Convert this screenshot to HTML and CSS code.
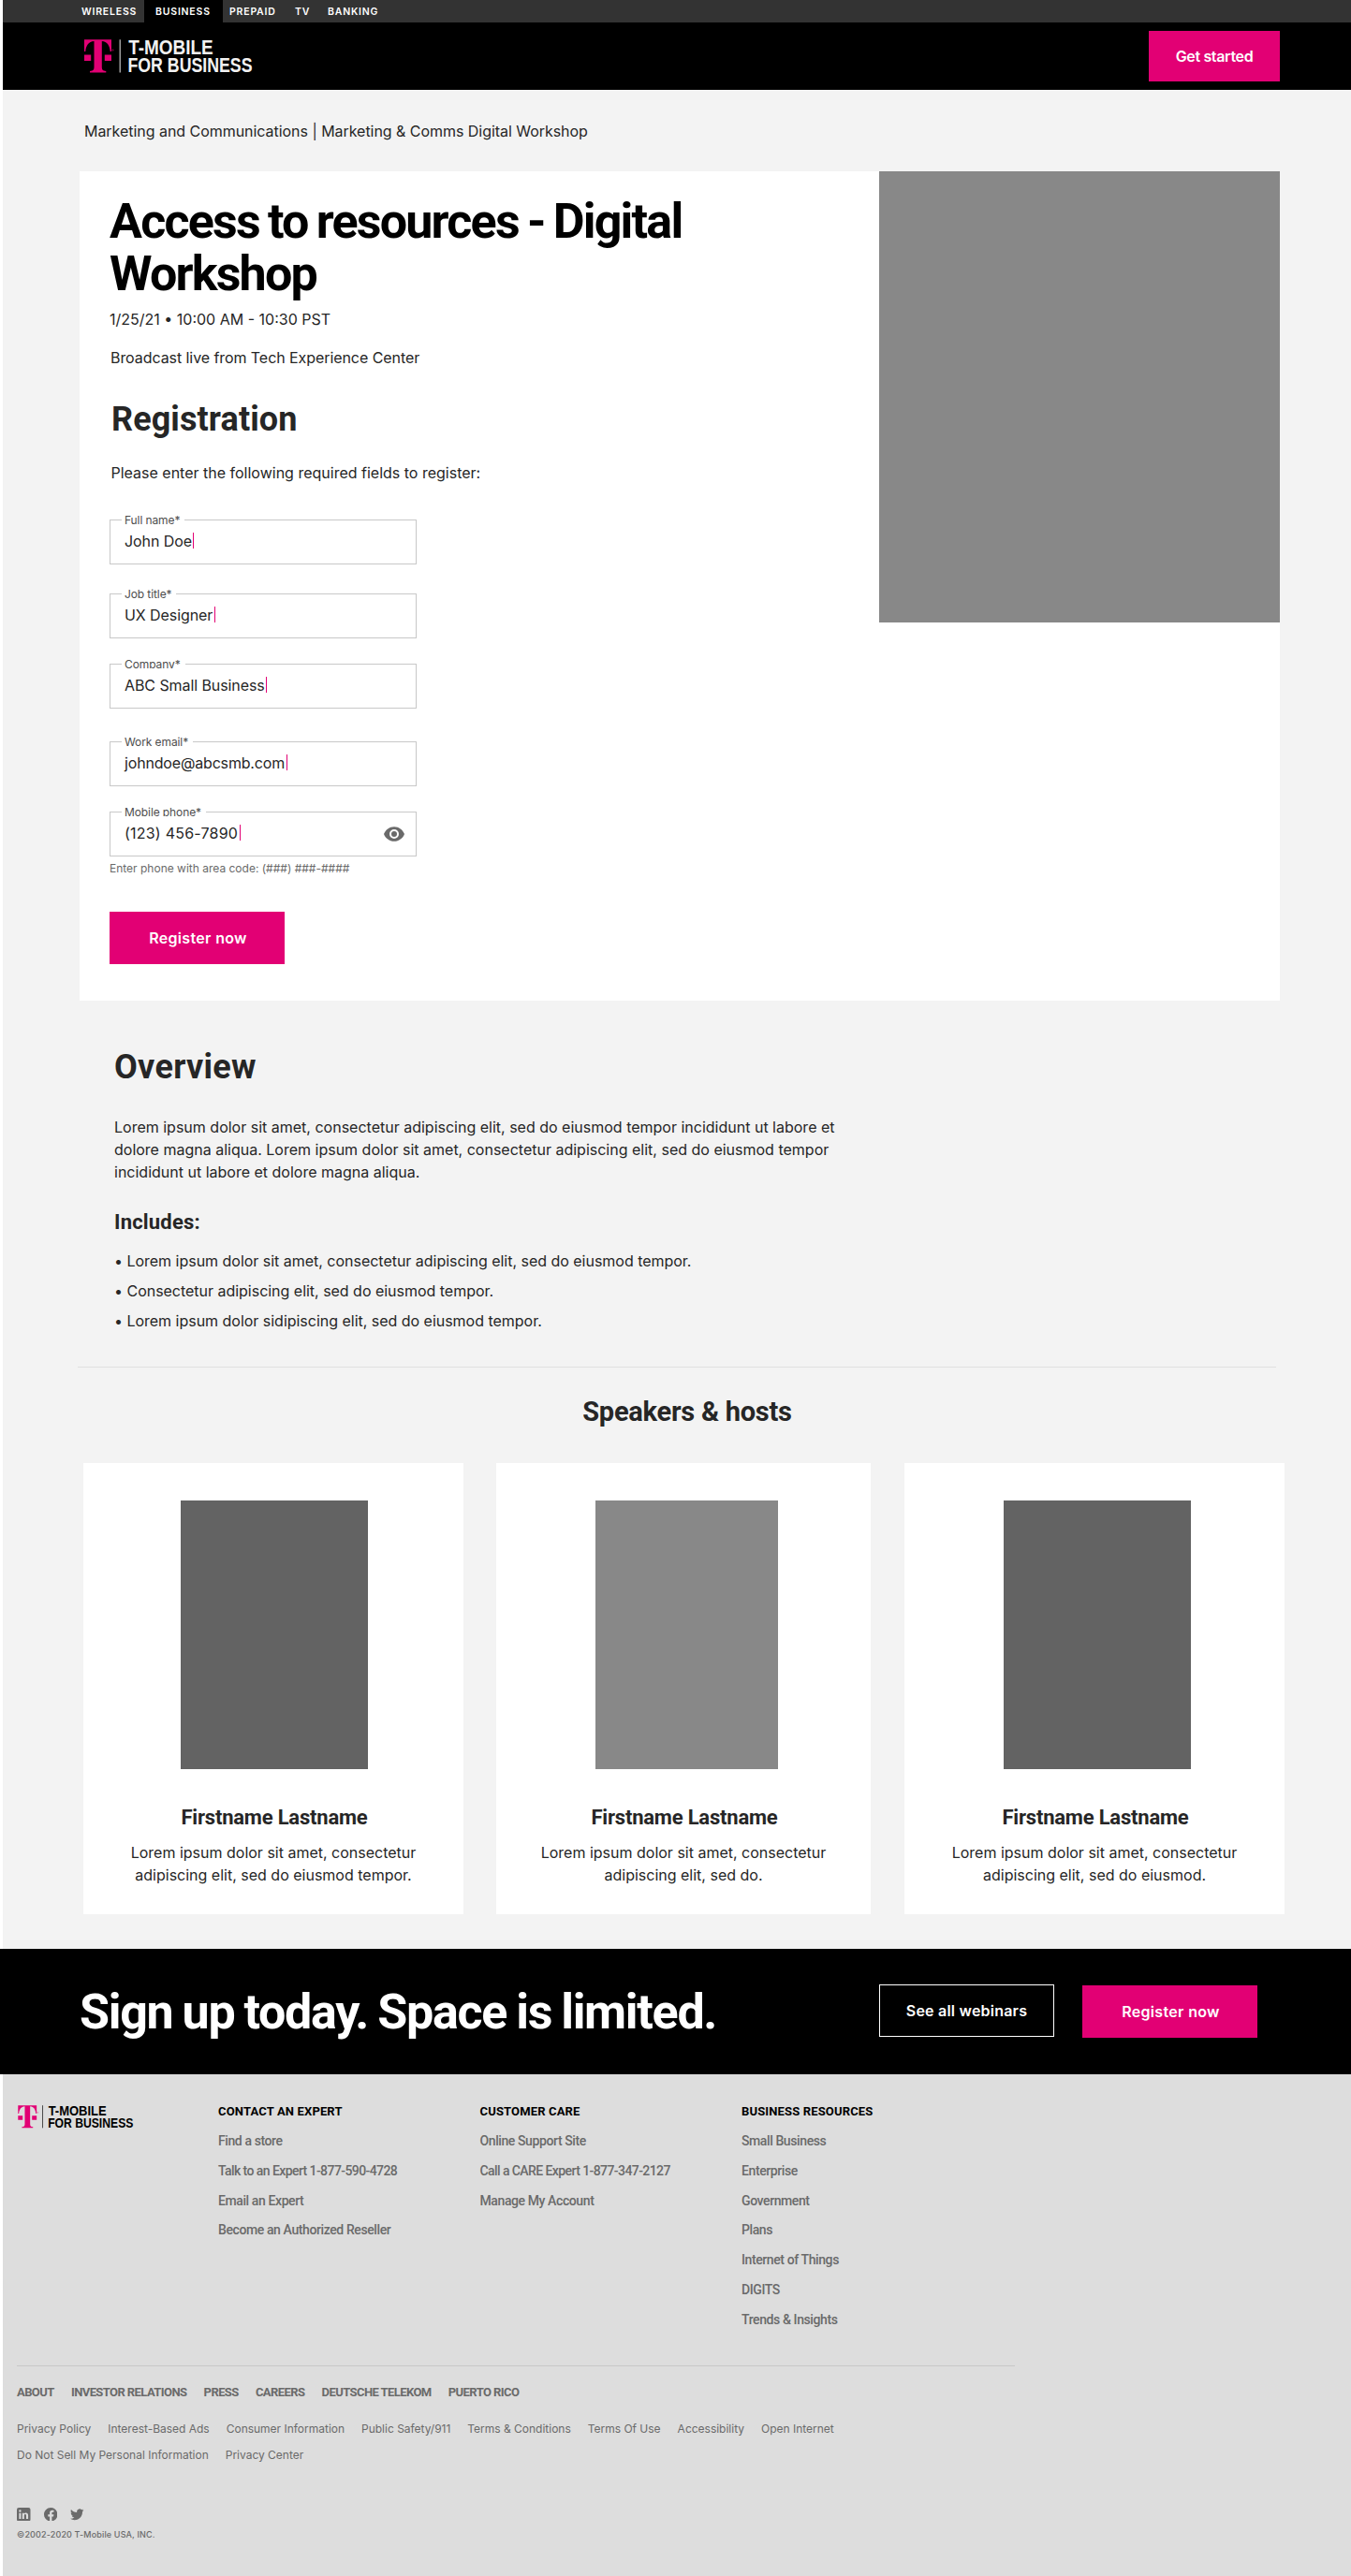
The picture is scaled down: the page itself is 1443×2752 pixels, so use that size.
FILE: index.html
```
<!DOCTYPE html>
<html lang="en">
<head>
<meta charset="utf-8">
<title>Digital Workshop | T-Mobile for Business</title>
<link rel="stylesheet" href="styles.css">
</head>
<body>
<nav class="topnav">
  <a class="tab tab-wireless">WIRELESS</a>
  <a class="tab tab-business">BUSINESS</a>
  <a class="tab tab-prepaid">PREPAID</a>
  <a class="tab tab-tv">TV</a>
  <a class="tab">BANKING</a>
</nav>
<header class="header">
  <svg class="header-logo logo" viewBox="0 0 180 36">
    <path fill="#e20074" d="M0 .3H29V13H27.7C27.2 7 24.600 2.300 18.800 2V29.500C18.800 32.500 19.800 33.700 23.300 33.900V35.400H6V33.900C9.500 33.700 10.500 32.500 10.500 29.500V2C4.600 2.300 1.800 7 1.300 13H0ZM0 16.500H7.200V23H0ZM21.800 16.500H29V23H21.800Z"/>
    <circle cx="30.500" cy="11.500" r=".7" fill="none" stroke="#e20074" stroke-width=".5"/>
    <rect x="37.500" y=".3" width="1.500" height="35.200" fill="currentColor" opacity=".65"/>
    <text x="47.200" y="16" textLength="90.500" lengthAdjust="spacingAndGlyphs">T-MOBILE</text>
    <text x="46.500" y="35.300" textLength="133" lengthAdjust="spacingAndGlyphs">FOR BUSINESS</text>
  </svg>
  <a class="btn btn-start">Get started</a>
</header>

<main class="main">
  <p class="breadcrumb">Marketing and Communications | Marketing &amp; Comms Digital Workshop</p>

  <section class="card">
    <div class="card-body">
      <h1>Access to resources - Digital<br>Workshop</h1>
      <p class="date">1/25/21 • 10:00 AM - 10:30 PST</p>
      <p class="broadcast">Broadcast live from Tech Experience Center</p>
      <h2 class="reg-title">Registration</h2>
      <p class="reg-intro">Please enter the following required fields to register:</p>
      <form class="form">
        <div class="field"><span class="label">Full name*</span><span class="value">John Doe</span><i class="caret"></i></div>
        <div class="field gap-m"><span class="label">Job title*</span><span class="value">UX Designer</span><i class="caret"></i></div>
        <div class="field gap-s"><span class="label">Company*</span><span class="value">ABC Small Business</span><i class="caret"></i></div>
        <div class="field gap-l"><span class="label">Work email*</span><span class="value value-email">johndoe@abcsmb.com</span><i class="caret"></i></div>
        <div class="field gap-s"><span class="label">Mobile phone*</span><span class="value value-phone">(123) 456-7890</span><i class="caret"></i>
          <svg class="eye" viewBox="0 0 24 24"><path fill="#6a6a6a" d="M12 4.200C7 4.200 2.730 7.400 1 12c1.730 4.600 6 7.800 11 7.800s9.270-3.200 11-7.800c-1.730-4.600-6-7.800-11-7.800zM12 17a5 5 0 1 1 0-10 5 5 0 0 1 0 10zm0-8a3 3 0 1 0 0 6 3 3 0 0 0 0-6z"/></svg>
        </div>
        <p class="helper">Enter phone with area code: (###) ###-####</p>
        <a class="btn btn-wide">Register now</a>
      </form>
    </div>
    <div class="hero-photo"></div>
  </section>

  <section class="overview">
    <h2>Overview</h2>
    <p class="overview-text">Lorem ipsum dolor sit amet, consectetur adipiscing elit, sed do eiusmod tempor incididunt ut labore et<br>dolore magna aliqua. Lorem ipsum dolor sit amet, consectetur adipiscing elit, sed do eiusmod tempor<br>incididunt ut labore et dolore magna aliqua.</p>
    <h3>Includes:</h3>
    <ul class="includes">
      <li>• Lorem ipsum dolor sit amet, consectetur adipiscing elit, sed do eiusmod tempor.</li>
      <li>• Consectetur adipiscing elit, sed do eiusmod tempor.</li>
      <li>• Lorem ipsum dolor sidipiscing elit, sed do eiusmod tempor.</li>
    </ul>
  </section>

  <hr class="rule">

  <h2 class="speakers-title">Speakers &amp; hosts</h2>
  <section class="speakers">
    <article class="speaker speaker-1">
      <div class="photo"></div>
      <h3>Firstname Lastname</h3>
      <p>Lorem ipsum dolor sit amet, consectetur<br>adipiscing elit, sed do eiusmod tempor.</p>
    </article>
    <article class="speaker speaker-2">
      <div class="photo"></div>
      <h3>Firstname Lastname</h3>
      <p>Lorem ipsum dolor sit amet, consectetur<br>adipiscing elit, sed do.</p>
    </article>
    <article class="speaker speaker-3">
      <div class="photo"></div>
      <h3>Firstname Lastname</h3>
      <p>Lorem ipsum dolor sit amet, consectetur<br>adipiscing elit, sed do eiusmod.</p>
    </article>
  </section>
</main>

<section class="banner">
  <h2>Sign up today. Space is limited.</h2>
  <a class="btn btn-wide btn-outline">See all webinars</a>
  <a class="btn btn-wide btn-banner">Register now</a>
</section>

<footer class="footer">
  <div class="footer-top">
    <svg class="footer-logo logo" viewBox="0 0 180 36">
      <path fill="#e20074" d="M0 .3H29V13H27.7C27.2 7 24.600 2.300 18.800 2V29.500C18.800 32.500 19.800 33.700 23.300 33.900V35.400H6V33.900C9.500 33.700 10.500 32.500 10.500 29.500V2C4.600 2.300 1.800 7 1.300 13H0ZM0 16.500H7.200V23H0ZM21.800 16.500H29V23H21.800Z"/>
      <circle cx="30.500" cy="11.500" r=".7" fill="none" stroke="#e20074" stroke-width=".5"/>
      <rect x="37.500" y=".3" width="1.500" height="35.200" fill="currentColor" opacity=".65"/>
      <text x="47.200" y="16" textLength="90.500" lengthAdjust="spacingAndGlyphs">T-MOBILE</text>
      <text x="46.500" y="35.300" textLength="133" lengthAdjust="spacingAndGlyphs">FOR BUSINESS</text>
    </svg>
    <div class="col">
      <h4>CONTACT AN EXPERT</h4>
      <a>Find a store</a>
      <a class="tight">Talk to an Expert 1-877-590-4728</a>
      <a>Email an Expert</a>
      <a>Become an Authorized Reseller</a>
    </div>
    <div class="col">
      <h4>CUSTOMER CARE</h4>
      <a>Online Support Site</a>
      <a class="tight">Call a CARE Expert 1-877-347-2127</a>
      <a>Manage My Account</a>
    </div>
    <div class="col">
      <h4>BUSINESS RESOURCES</h4>
      <a>Small Business</a>
      <a>Enterprise</a>
      <a>Government</a>
      <a>Plans</a>
      <a>Internet of Things</a>
      <a>DIGITS</a>
      <a>Trends &amp; Insights</a>
    </div>
  </div>
  <hr class="footer-rule">
  <div class="corporate">
    <a>ABOUT</a><a>INVESTOR RELATIONS</a><a>PRESS</a><a>CAREERS</a><a>DEUTSCHE TELEKOM</a><a>PUERTO RICO</a>
  </div>
  <div class="legal">
    <div class="legal-row"><a>Privacy Policy</a><a>Interest-Based Ads</a><a>Consumer Information</a><a>Public Safety/911</a><a>Terms &amp; Conditions</a><a>Terms Of Use</a><a>Accessibility</a><a>Open Internet</a></div>
    <div class="legal-row"><a>Do Not Sell My Personal Information</a><a>Privacy Center</a></div>
  </div>
  <div class="social">
    <svg viewBox="3 3 18 18"><path fill="#6a6a6a" fill-rule="evenodd" d="M5.500 3h13A2.500 2.500 0 0 1 21 5.500v13a2.500 2.500 0 0 1-2.500 2.500h-13A2.500 2.500 0 0 1 3 18.500v-13A2.500 2.500 0 0 1 5.500 3zM6 10v8h2.500v-8zM7.250 5.900a1.450 1.450 0 1 0 0 2.900 1.450 1.450 0 0 0 0-2.900zM10.200 10v8h2.500v-4.300c0-1.200.5-1.900 1.400-1.900s1.300.7 1.300 1.900V18h2.600v-4.900c0-2.200-1.200-3.300-2.900-3.300-1.200 0-1.900.6-2.400 1.400V10z"/></svg>
    <svg viewBox="0 0 24 24"><path fill="#6a6a6a" d="M24 12.073C24 5.405 18.627 0 12 0S0 5.405 0 12.073c0 6.026 4.388 11.021 10.125 11.927v-8.437H7.078v-3.490h3.047V9.413c0-3.026 1.792-4.697 4.533-4.697 1.312 0 2.686.236 2.686.236v2.971h-1.513c-1.491 0-1.956.93-1.956 1.886v2.264h3.328l-.532 3.490h-2.796V24C19.612 23.094 24 18.100 24 12.073z"/></svg>
    <svg viewBox="0 0 24 24"><path fill="#6a6a6a" d="M23.953 4.570a10 10 0 0 1-2.825.775 4.958 4.958 0 0 0 2.163-2.723c-.951.555-2.005.959-3.127 1.184a4.920 4.920 0 0 0-8.384 4.482C7.690 8.095 4.067 6.130 1.640 3.162a4.822 4.822 0 0 0-.666 2.475c0 1.710.87 3.213 2.188 4.096a4.904 4.904 0 0 1-2.228-.616v.06a4.923 4.923 0 0 0 3.946 4.827 4.996 4.996 0 0 1-2.212.085 4.936 4.936 0 0 0 4.604 3.417 9.867 9.867 0 0 1-6.102 2.105c-.39 0-.779-.023-1.170-.067a13.995 13.995 0 0 0 7.557 2.209c9.053 0 13.998-7.496 13.998-13.985 0-.21 0-.42-.015-.63A9.935 9.935 0 0 0 24 4.590z"/></svg>
  </div>
  <p class="copyright">©2002-2020 T-Mobile USA, INC.</p>
</footer>
</body>
</html>
```
FILE: styles.css
```
* { box-sizing: border-box; }
body {
  margin: 0;
  background: #fff;
  color: #262626;
  font: 400 16px/24px Inter, "Liberation Sans", sans-serif;
}
h1, h2, h3, h4, p, ul, hr { margin: 0; padding: 0; border: 0; }
h1, h2, h3, h4 { font-family: Roboto, "Liberation Sans", sans-serif; font-weight: 700; }
ul { list-style: none; }
svg { display: block; }

.logo { overflow: visible; }
.logo text { font: 700 22px "Liberation Sans", Arial, sans-serif; fill: currentColor; }

.topnav {
  display: flex;
  height: 24px;
  margin-left: 3px;
  padding-left: 84px;
  background: #333;
  color: #fff;
  font-size: 10.5px;
  font-weight: 600;
  line-height: 25px;
  letter-spacing: 0.8px;
}
.tab-wireless { width: 67px; }
.tab-business { width: 84px; padding-left: 12px; background: #000; }
.tab-prepaid { width: 70px; margin-left: 7px; }
.tab-tv { width: 35px; }

.header {
  display: flex;
  justify-content: space-between;
  align-items: flex-start;
  height: 72px;
  margin-left: 3px;
  padding: 9px 76px 0 87px;
  background: #000;
}
.header-logo { width: 180px; height: 36px; margin-top: 9px; color: #f2f2f2; }

.btn {
  display: flex;
  align-items: center;
  justify-content: center;
  background: #e20074;
  color: #fff;
  font-weight: 600;
}
.btn-start { width: 140px; height: 54px; letter-spacing: -0.34px; }
.btn-wide { width: 187px; height: 56px; padding-left: 2px; letter-spacing: 0.33px; }

.main {
  margin-left: 3px;
  height: 1986px;
  padding: 32px 0 0 82px;
  background: #f3f3f3;
}
.breadcrumb { padding-left: 5px; letter-spacing: -0.04px; }

.card {
  display: flex;
  justify-content: space-between;
  align-items: flex-start;
  width: 1282px;
  height: 886px;
  margin-top: 31px;
  background: #fff;
}
.card-body { padding: 26px 0 0 32px; }
.card h1 {
  color: #000;
  font-size: 52px;
  line-height: 56px;
  letter-spacing: -1.8px;
  word-spacing: -2px;
}
.date { margin-top: 8px; }
.broadcast { margin: 17px 0 0 1px; letter-spacing: -0.07px; }
.reg-title { margin: 32px 0 0 2px; font-size: 36px; line-height: 44px; letter-spacing: 0.1px; }
.reg-intro { margin: 23px 0 0 1.500px; }
.hero-photo { width: 428px; height: 482px; background: #888; }

.form { margin-top: 38px; }
.field {
  position: relative;
  display: flex;
  align-items: flex-start;
  width: 328px;
  height: 48px;
  padding: 10px 0 0 15px;
  border: 1px solid #c8c8c8;
}
.gap-s { margin-top: 27px; }
.gap-m { margin-top: 31px; }
.gap-l { margin-top: 35px; }
.label {
  position: absolute;
  left: 12px;
  top: -9px;
  height: 13px;
  overflow: hidden;
  padding: 0 5px 0 3px;
  background: #fff;
  color: #4d4d4d;
  font-size: 12px;
  line-height: 17px;
  letter-spacing: -0.1px;
}
.value { letter-spacing: -0.08px; }
.value-email { letter-spacing: -0.17px; }
.value-phone { letter-spacing: 0.22px; }
.caret { width: 1px; height: 17px; margin: 3px 0 0 1.500px; background: #e20074; }
.eye { width: 24px; height: 24px; margin: 1px 11px 0 auto; }
.helper { margin-top: 5px; color: #6a6a6a; font-size: 12px; line-height: 16px; }
.form .btn { margin-top: 38px; }

.overview { padding: 49px 0 0 37px; }
.overview h2 { font-size: 36px; line-height: 44px; letter-spacing: 0.3px; }
.overview-text { margin-top: 30px; }
.overview h3 { margin-top: 28px; font-size: 22px; line-height: 28px; letter-spacing: 0.2px; }
.includes { margin-top: 11px; line-height: 32px; letter-spacing: -0.02px; }

.rule { width: 1280px; height: 1px; margin: 33px 0 0 -2px; background: #e0e0e0; }
.speakers-title {
  width: 1298px;
  margin: 29px 0 0;
  text-align: center;
  font-size: 29px;
  line-height: 36px;
  letter-spacing: -0.25px;
}
.speakers {
  display: flex;
  width: 1283px;
  height: 482px;
  margin: 37px 0 0 4px;
}
.speaker { width: 406px; padding-top: 40px; background: #fff; text-align: center; }
.speaker-2 { width: 400px; margin: 0 36px 0 35px; }
.photo { width: 200px; height: 287px; margin-left: 104px; background: #636363; }
.speaker-2 .photo { width: 195px; margin-left: 106px; background: #888; }
.speaker-3 .photo { margin-left: 106px; }
.speaker h3 {
  margin-top: 38px;
  padding-left: 2px;
  font-size: 22px;
  line-height: 28px;
  letter-spacing: -0.2px;
}
.speaker p { margin-top: 11px; }

.banner {
  display: flex;
  height: 134px;
  padding: 38px 0 0 85px;
  background: #000;
  color: #fff;
}
.banner h2 {
  width: 854px;
  padding-top: 1px;
  font-size: 52px;
  line-height: 58px;
  letter-spacing: -1.3px;
  word-spacing: -1.500px;
}
.btn-outline { padding-left: 0; background: none; border: 1px solid #fff; letter-spacing: 0.22px; }
.btn-banner { margin: 1px 0 0 30px; }

.footer {
  height: 536px;
  margin-left: 3px;
  padding: 32px 0 0 15px;
  background: #ddd;
  color: #6a6a6a;
}
.footer-top { display: grid; grid-template-columns: 215px 279.5px 279.5px 293px; }
.footer-logo { width: 124px; height: 24.700px; margin: 1px 0 0 1px; color: #000; }
.col { display: flex; flex-direction: column; }
.col h4 { margin-bottom: 8px; color: #000; font-size: 13px; line-height: 16px; letter-spacing: 0.15px; }
.col a { font: 500 14px/31.830px Roboto, sans-serif; letter-spacing: -0.4px; }
.col .tight { letter-spacing: -0.58px; }
.footer-rule { width: 1066px; height: 1px; margin-top: 32px; background: #c8c8c8; }
.corporate {
  display: flex;
  gap: 18.200px;
  margin-top: 20px;
  font: 700 13px/16px Roboto, sans-serif;
  letter-spacing: -0.58px;
}
.legal { margin-top: 17px; font-size: 12px; line-height: 28.500px; letter-spacing: -0.01px; }
.legal-row { display: flex; gap: 18px; }
.social { display: flex; gap: 14px; margin-top: 41px; }
.social svg { width: 14.500px; height: 14.500px; }
.copyright { margin-top: 9px; font-size: 9px; line-height: 12px; font-weight: 500; letter-spacing: 0.15px; }
```
